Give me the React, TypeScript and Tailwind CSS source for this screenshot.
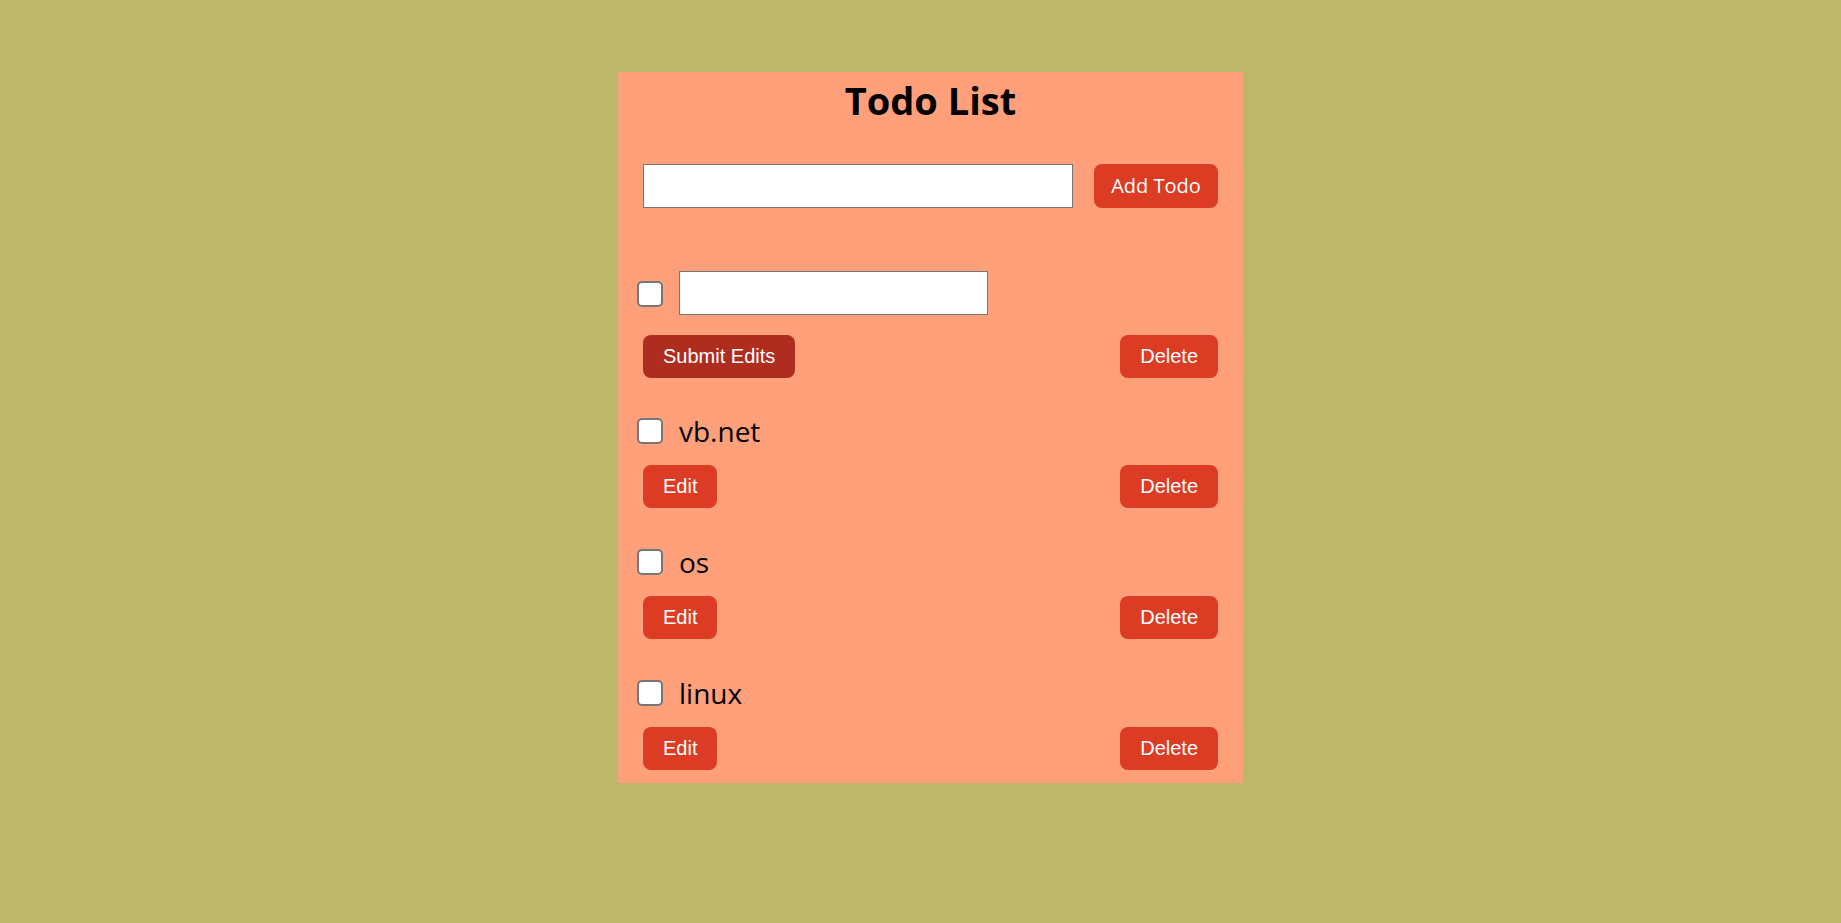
import { useState } from 'react';

type Todo = {
    id: number;
    text: string;
    done: boolean;
};

const initialTodos: Todo[] = [
    { id: 1, text: '', done: false },
    { id: 2, text: 'vb.net', done: false },
    { id: 3, text: 'os', done: false },
    { id: 4, text: 'linux', done: false },
];

const btn = "h-[43px] px-5 rounded-[8px] text-white text-[20px] leading-[23px] font-['Liberation_Sans',Arial,sans-serif]";

const App = (): JSX.Element => {
    const [todos, setTodos] = useState<Todo[]>(initialTodos);
    const [editingId] = useState<number>(1);

    const toggle = (id: number) => {
        setTodos(todos.map((t) => (t.id === id ? { ...t, done: !t.done } : t)));
    };

    return (
        <div className="min-h-[923px] w-full bg-[#bdb76b] flex justify-center pt-[72px]">
            <div className="w-[625px] ml-[20px] self-start bg-[#ffa07a] pt-[8px] pb-[13px]">
                <h1 className="text-center text-[38px] leading-[40px] font-bold text-black font-['Open_Sans','Noto_Sans',sans-serif]">
                    Todo List
                </h1>

                {/* Add form */}
                <div className="mt-[44px] px-[25px] flex gap-[21px]">
                    <input type="text" className="flex-1 h-[44px] bg-white border border-[#767676]" />
                    <button className="w-[124px] h-[44px] rounded-[8px] bg-[#db3c23] text-white text-[20px] font-['Open_Sans',sans-serif]">
                        Add Todo
                    </button>
                </div>

                {/* Todo items */}
                <div className="mt-[63px]">
                    {todos.map((todo, i) => (
                        <div key={todo.id} className={i === 0 ? '' : i === 1 ? 'mt-[40px]' : 'mt-[41px]'}>
                            {todo.id === editingId ? (
                                <div className="pl-[19px] flex items-center gap-[16px]">
                                    <input
                                        type="checkbox"
                                        checked={todo.done}
                                        onChange={() => toggle(todo.id)}
                                        className="appearance-none w-[26px] h-[26px] mt-[2px] bg-white border-2 border-[#767676] rounded-[5px]"
                                    />
                                    <input type="text" defaultValue={todo.text} className="w-[309px] h-[44px] bg-white border border-[#767676]" />
                                </div>
                            ) : (
                                <div className="pl-[19px] h-[26px] flex items-center gap-[16px]">
                                    <input
                                        type="checkbox"
                                        checked={todo.done}
                                        onChange={() => toggle(todo.id)}
                                        className="appearance-none w-[26px] h-[26px] bg-white border-2 border-[#767676] rounded-[5px]"
                                    />
                                    <span className="text-[28px] leading-[26px] text-black font-['Open_Sans','Noto_Sans',sans-serif]">
                                        {todo.text}
                                    </span>
                                </div>
                            )}
                            <div className={`${todo.id === editingId ? 'mt-[20px]' : 'mt-[21px]'} px-[25px] flex justify-between`}>
                                {todo.id === editingId ? (
                                    <button className={`${btn} bg-[#ae2d1e]`}>Submit Edits</button>
                                ) : (
                                    <button className={`${btn} bg-[#db3c23]`}>Edit</button>
                                )}
                                <button className={`${btn} bg-[#db3c23]`}>Delete</button>
                            </div>
                        </div>
                    ))}
                </div>
            </div>
        </div>
    );
};

export default App;
